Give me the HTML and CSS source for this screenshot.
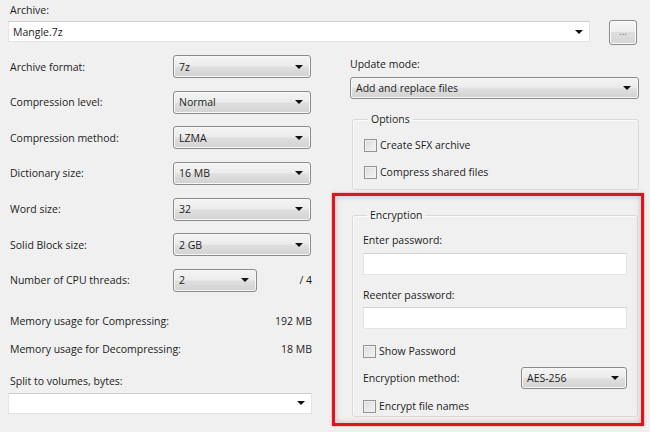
FILE: index.html
```html
<!DOCTYPE html>
<html>
<head>
<meta charset="utf-8">
<link rel="stylesheet" href="styles.css">
</head>
<body>
<div class="dlg">
  <div class="lbl archive-lbl">Archive:</div>
  <div class="archive-row">
    <div class="edit archive-edit"><span>Mangle.7z</span><span class="arrow"></span></div>
    <div class="btn">...</div>
  </div>
  <div class="cols">
    <div class="left">
      <div class="rows">
        <div class="row"><span class="lbl">Archive format:</span><div class="sel w138"><span>7z</span><span class="arrow"></span></div></div>
        <div class="row"><span class="lbl">Compression level:</span><div class="sel w138"><span>Normal</span><span class="arrow"></span></div></div>
        <div class="row"><span class="lbl">Compression method:</span><div class="sel w138"><span>LZMA</span><span class="arrow"></span></div></div>
        <div class="row"><span class="lbl">Dictionary size:</span><div class="sel w138"><span>16 MB</span><span class="arrow"></span></div></div>
        <div class="row"><span class="lbl">Word size:</span><div class="sel w138"><span>32</span><span class="arrow"></span></div></div>
        <div class="row"><span class="lbl">Solid Block size:</span><div class="sel w138"><span>2 GB</span><span class="arrow"></span></div></div>
        <div class="row"><span class="lbl">Number of CPU threads:</span><div class="sel w84"><span>2</span><span class="arrow"></span></div><span class="of">/ 4</span></div>
      </div>
      <div class="mem mem1"><span class="lbl">Memory usage for Compressing:</span><span class="val">192 MB</span></div>
      <div class="mem mem2"><span class="lbl">Memory usage for Decompressing:</span><span class="val">18 MB</span></div>
      <div class="lbl split-lbl">Split to volumes, bytes:</div>
      <div class="edit split-edit"><span></span><span class="arrow"></span></div>
    </div>
    <div class="right">
      <div class="lbl update-lbl">Update mode:</div>
      <div class="sel update-sel"><span>Add and replace files</span><span class="arrow"></span></div>
      <fieldset class="group options">
        <legend>Options</legend>
        <label class="chk"><span class="box"></span>Create SFX archive</label>
        <label class="chk chk2"><span class="box"></span>Compress shared files</label>
      </fieldset>
      <div class="highlight">
        <fieldset class="group enc">
          <legend>Encryption</legend>
          <div class="lbl enc-lbl">Enter password:</div>
          <div class="pw pw1"></div>
          <div class="lbl enc-lbl2">Reenter password:</div>
          <div class="pw pw2"></div>
          <label class="chk show"><span class="box"></span>Show Password</label>
          <div class="method-row"><span class="lbl">Encryption method:</span><div class="sel w106"><span>AES-256</span><span class="arrow"></span></div></div>
          <label class="chk names"><span class="box"></span>Encrypt file names</label>
        </fieldset>
      </div>
    </div>
  </div>
</div>
</body>
</html>
```

FILE: styles.css
```css
* { box-sizing: border-box; }
html, body {
  margin: 0;
  padding: 0;
  background: #f0f0f0;
}
body {
  width: 650px;
  height: 432px;
  overflow: hidden;
  font-family: "Open Sans", "Noto Sans", sans-serif;
  font-size: 10.5px;
  color: #1c1c1c;
}
.dlg {
  padding: 2px 0 0 8px;
}
.lbl {
  line-height: 16px;
  white-space: nowrap;
}
.archive-lbl { padding-left: 2px; }
.archive-row {
  display: flex;
  align-items: flex-start;
  margin-top: 3px;
}
.edit {
  background: #fff;
  border: 1px solid #e4e4e4;
  border-top-color: #cdcdcd;
  display: flex;
  align-items: center;
  justify-content: space-between;
  padding: 0 6px 0 4px;
  height: 21px;
}
.archive-edit { width: 582px; }
.btn {
  margin-left: 19px;
  margin-top: -1px;
  width: 28px;
  height: 25px;
  border: 1px solid #8c8c8c;
  border-radius: 3px;
  background: linear-gradient(#f6f6f6, #ececec 50%, #dedede 50%, #d6d6d6);
  box-shadow: inset 0 0 0 1px #fbfbfb;
  color: #808080;
  font-size: 10px;
  text-align: center;
  line-height: 21px;
}
.arrow {
  width: 0;
  height: 0;
  border-left: 4px solid transparent;
  border-right: 4px solid transparent;
  border-top: 4px solid #111;
  flex: none;
}
.cols {
  display: flex;
  margin-top: 11px;
}
.left {
  width: 304px;
  flex: none;
}
.rows {
  display: flex;
  flex-direction: column;
  gap: 12.67px;
  margin-top: -1px;
}
.row {
  display: flex;
  align-items: center;
  height: 23px;
}
.row .lbl {
  width: 165px;
  padding-left: 2px;
}
.sel {
  height: 23px;
  border: 1px solid #8b8b8b;
  border-radius: 3px;
  background: linear-gradient(#f4f4f4, #ececec 45%, #dedede 55%, #d2d2d2);
  box-shadow: inset 0 0 0 1px #f7f7f7;
  display: flex;
  align-items: center;
  justify-content: space-between;
  padding: 0 7px 0 5px;
  flex: none;
}
.w138 { width: 138px; }
.w84 { width: 84px; }
.w106 { width: 106px; }
.of {
  margin-left: auto;
}
.mem {
  display: flex;
  justify-content: space-between;
  line-height: 16px;
  padding-left: 2px;
}
.mem1 { margin-top: 21px; }
.mem2 { margin-top: 12px; }
.split-lbl { margin-top: 16px; padding-left: 2px; }
.split-edit { margin-top: 4px; width: 304px; }
.right {
  margin-left: 38px;
  width: 290px;
  flex: none;
}
.update-sel {
  margin-top: 5px;
  width: 289px;
  height: 22px;
}
.group {
  margin: 0;
  border: 1px solid #d9d9d9;
  box-shadow: inset 1px 1px 0 #fbfbfb;
  border-radius: 3px;
  padding: 0;
  min-width: 0;
}
.group legend {
  padding: 0 3px;
  margin-left: 4px;
  line-height: 16px;
}
.options {
  margin-top: 12px;
  margin-left: 2px;
  width: 287px;
  height: 79px;
  padding: 10px 0 0 11px;
}
.chk {
  display: flex;
  align-items: center;
  gap: 3px;
  line-height: 16px;
  height: 16px;
}
.chk2 { margin-top: 11px; }
.box {
  width: 13px;
  height: 13px;
  border: 1px solid #939393;
  background: linear-gradient(135deg, #dcdcdc, #f4f4f4);
  box-shadow: inset 0 0 0 1px #f0f0f0;
  flex: none;
}
.highlight {
  margin-top: 3px;
  margin-left: -18px;
  width: 312px;
  height: 233px;
  border: 3px solid #e0141c;
  box-shadow: 0 0 2px rgba(224,20,28,0.5), inset 0 0 6px rgba(0,0,0,0.22);
  padding: 11px 3px 0 17px;
}
.enc {
  width: 286px;
  height: 210px;
  padding: 9px 0 0 10px;
}
.pw {
  width: 264px;
  height: 22px;
  background: #fff;
  border: 1px solid #e4e4e4;
  border-top-color: #d2d2d2;
}
.pw1 { margin-top: 5px; }
.enc-lbl2 { margin-top: 12px; }
.pw2 { margin-top: 4px; }
.show { margin-top: 14px; }
.method-row {
  display: flex;
  align-items: center;
  justify-content: space-between;
  width: 264px;
  margin-top: 8px;
  height: 22px;
}
.method-row .sel { height: 22px; }
.names { margin-top: 9px; }
```
